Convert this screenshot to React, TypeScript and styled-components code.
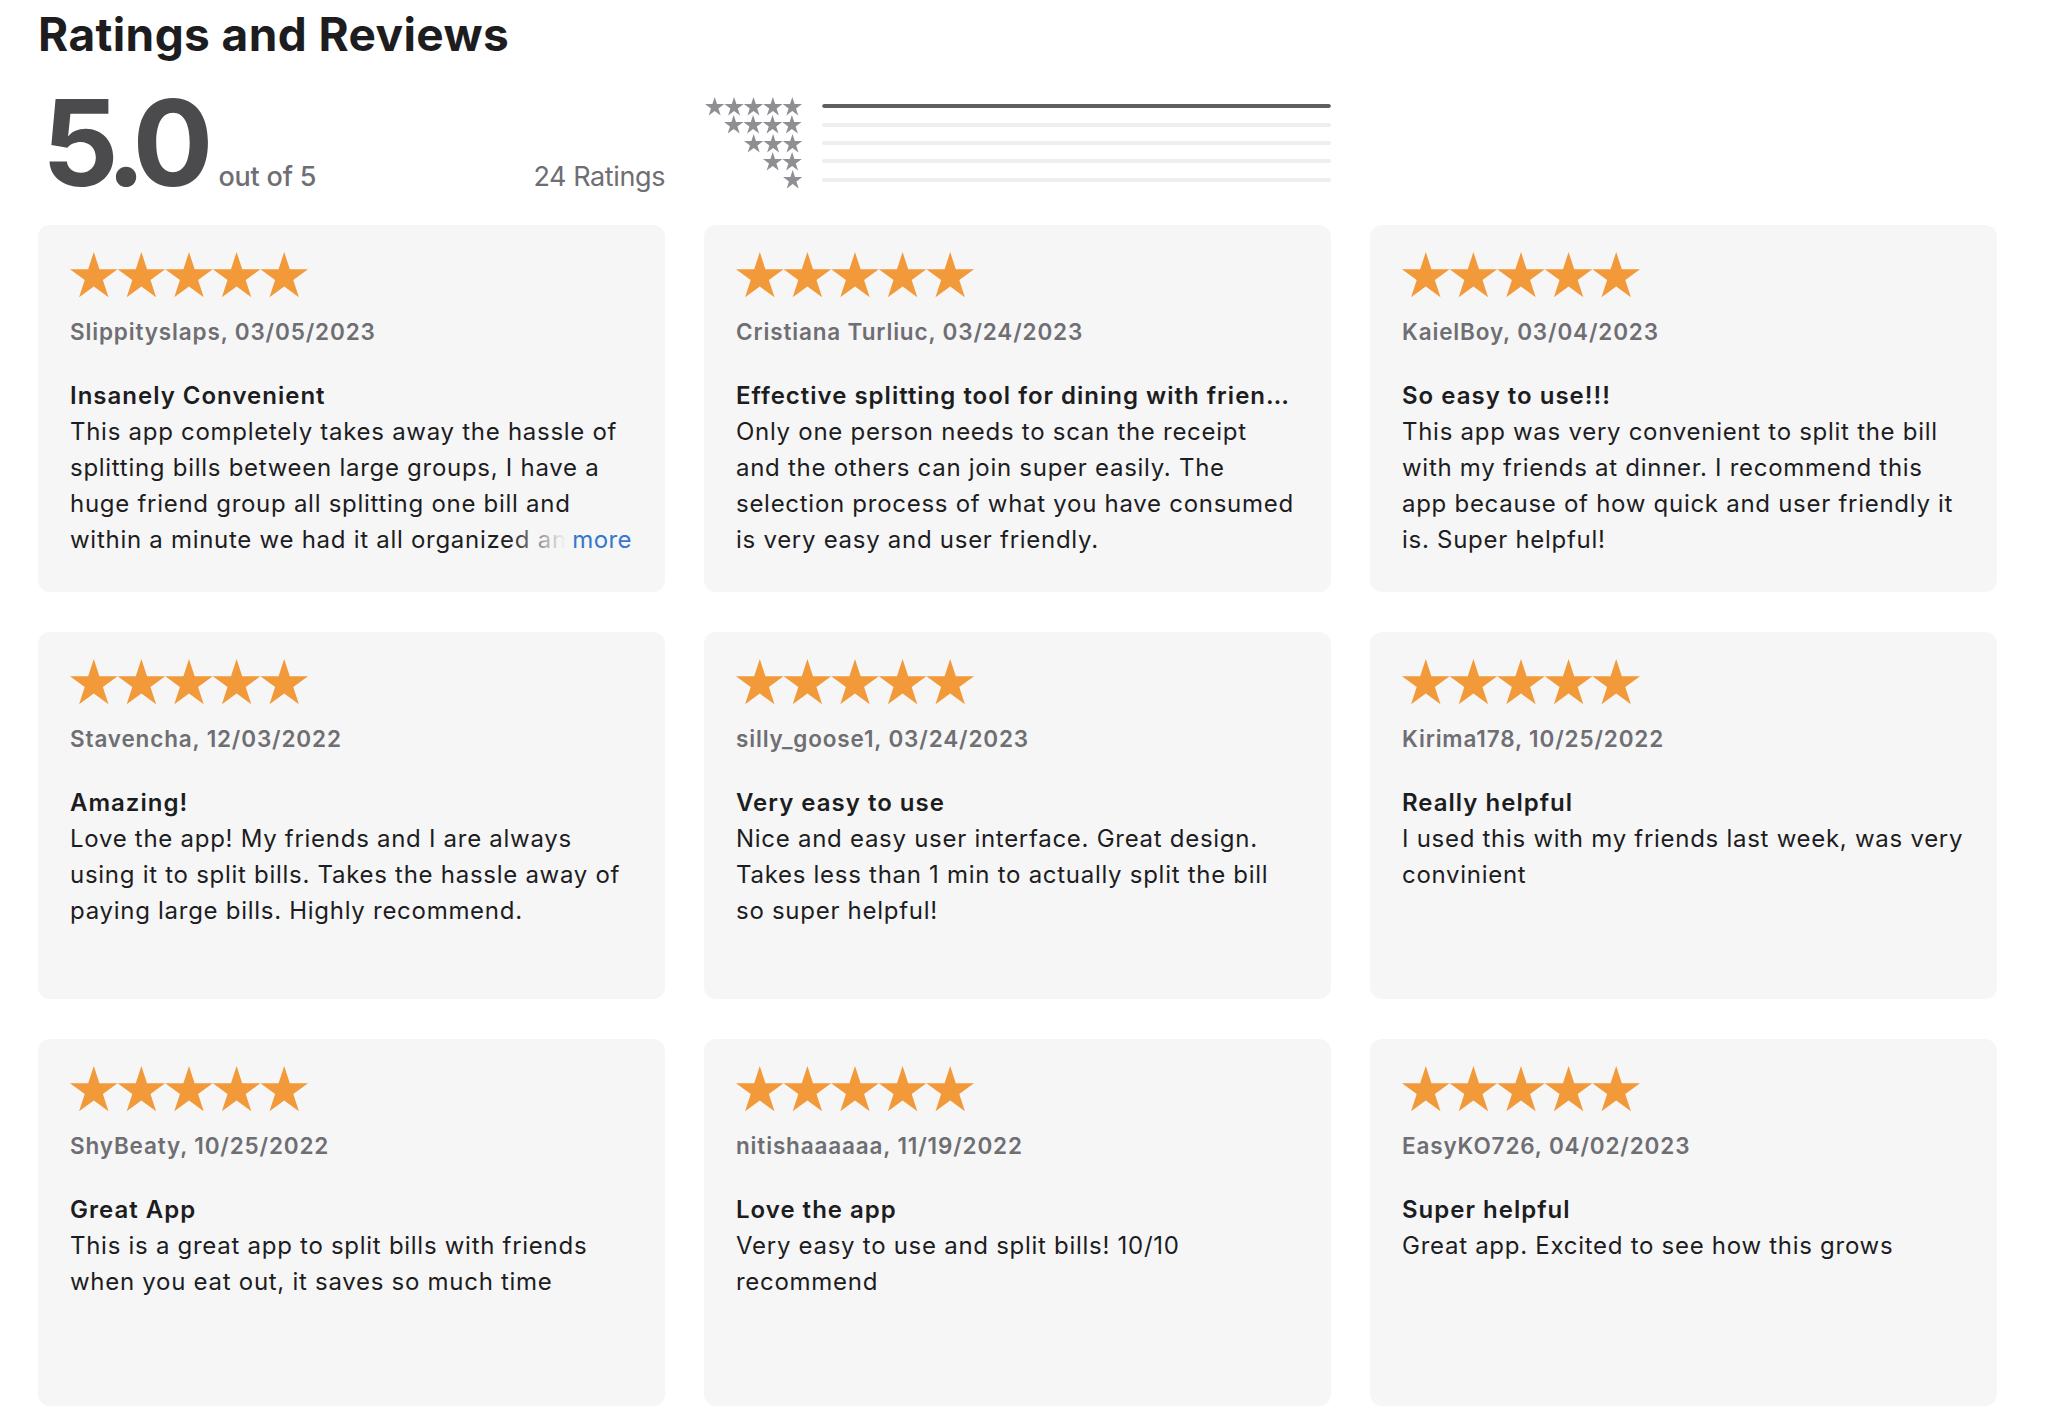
import React from "react";
import styled, { createGlobalStyle } from "styled-components";

const GlobalStyle = createGlobalStyle`
  html, body { margin: 0; padding: 0; background: #ffffff; }
  body { font-family: Inter, "Noto Sans", "Liberation Sans", sans-serif; -webkit-font-smoothing: antialiased; }
`;

const Page = styled.div`
  width: 2048px;
  box-sizing: border-box;
  padding: 6px 50px 21px 38px;
`;

const Heading = styled.h2`
  margin: 0;
  font-size: 46px;
  line-height: 56px;
  font-weight: 700;
  color: #1d1d1f;
  letter-spacing: 0.4px;
`;

const Columns = styled.div`
  display: grid;
  grid-template-columns: repeat(3, 627px);
  column-gap: 39px;
  row-gap: 40px;
`;

const SummaryRow = styled(Columns)`
  margin: 21px 0 22px;
  align-items: center;
`;

const ScoreBlock = styled.div`
  display: flex;
  align-items: baseline;
`;

const Score = styled.span`
  font-size: 120px;
  line-height: 120px;
  font-weight: 700;
  color: #4b4b4e;
  letter-spacing: -10px;
  margin-left: 4px;
`;

const OutOf = styled.span`
  margin-left: 15px;
  font-size: 27px;
  font-weight: 500;
  letter-spacing: -0.2px;
  color: #6e6e73;
`;

const RatingCount = styled.span`
  margin-left: auto;
  font-size: 27px;
  font-weight: 400;
  letter-spacing: -0.4px;
  color: #6e6e73;
`;

const Histogram = styled.div`
  display: grid;
  grid-template-columns: 98px 1fr;
  column-gap: 20px;
  align-items: center;
`;

const HistStars = styled.div`
  height: 18.3px;
  display: flex;
  justify-content: flex-end;
  align-items: center;
`;

const BarTrack = styled.div`
  height: 4px;
  border-radius: 2px;
  background: #eeeef0;
  overflow: hidden;
`;

const BarFill = styled.div`
  height: 100%;
  background: #5e5e61;
  border-radius: 2px;
`;

const Card = styled.article`
  background: #f6f6f7;
  border-radius: 12px;
  height: 367px;
  box-sizing: border-box;
  padding: 27px 33px 0 32px;
  overflow: hidden;
`;

const Reviewer = styled.div`
  margin-top: 19px;
  font-size: 22.5px;
  line-height: 30px;
  font-weight: 600;
  letter-spacing: 0.85px;
  color: #6e6e73;
`;

const ReviewTitle = styled.h3`
  margin: 31px 0 0;
  font-size: 24px;
  line-height: 36px;
  font-weight: 600;
  letter-spacing: 1px;
  color: #1d1d1f;
  white-space: nowrap;
  overflow: hidden;
  text-overflow: ellipsis;
`;

const Body = styled.div`
  position: relative;
  font-size: 24px;
  line-height: 36px;
  font-weight: 400;
  letter-spacing: 0.72px;
  color: #1d1d1f;
  max-height: 144px;
  overflow: hidden;
`;

const More = styled.span`
  position: absolute;
  right: 0;
  bottom: 0;
  line-height: 36px;
  padding-left: 64px;
  color: #3478d0;
  letter-spacing: 0.4px;
  background: linear-gradient(to right, rgba(246, 246, 247, 0) 0px, #f6f6f7 58px);
`;

function starPoints(cx: number, cy: number, R: number, r: number) {
  const pts: string[] = [];
  for (let i = 0; i < 10; i++) {
    const a = ((-90 + i * 36) * Math.PI) / 180;
    const rad = i % 2 === 0 ? R : r;
    pts.push(`${(cx + rad * Math.cos(a)).toFixed(2)},${(cy + rad * Math.sin(a)).toFixed(2)}`);
  }
  return pts.join(" ");
}

const StarRow: React.FC<{ count: number; cell: number; color: string }> = ({ count, cell, color }) => {
  const R = cell / 1.902;
  const h = R * 1.809;
  return (
    <svg width={cell * count} height={Math.ceil(h)} viewBox={`0 0 ${cell * count} ${Math.ceil(h)}`} style={{ display: "block" }}>
      {Array.from({ length: count }).map((_, i) => (
        <polygon key={i} points={starPoints(cell * i + cell / 2, R, R, R * 0.382)} fill={color} />
      ))}
    </svg>
  );
};

type Review = { author: string; date: string; title: string; body: string; more?: boolean };

const reviews: Review[] = [
  {
    author: "Slippityslaps",
    date: "03/05/2023",
    title: "Insanely Convenient",
    body:
      "This app completely takes away the hassle of splitting bills between large groups, I have a huge friend group all splitting one bill and within a minute we had it all organized and everyone paid back.",
    more: true,
  },
  {
    author: "Cristiana Turliuc",
    date: "03/24/2023",
    title: "Effective splitting tool for dining with frien…",
    body:
      "Only one person needs to scan the receipt and the others can join super easily. The selection process of what you have consumed is very easy and user friendly.",
  },
  {
    author: "KaielBoy",
    date: "03/04/2023",
    title: "So easy to use!!!",
    body:
      "This app was very convenient to split the bill with my friends at dinner. I recommend this app because of how quick and user friendly it is. Super helpful!",
  },
  {
    author: "Stavencha",
    date: "12/03/2022",
    title: "Amazing!",
    body:
      "Love the app! My friends and I are always using it to split bills. Takes the hassle away of paying large bills. Highly recommend.",
  },
  {
    author: "silly_goose1",
    date: "03/24/2023",
    title: "Very easy to use",
    body: "Nice and easy user interface. Great design. Takes less than 1 min to actually split the bill so super helpful!",
  },
  {
    author: "Kirima178",
    date: "10/25/2022",
    title: "Really helpful",
    body: "I used this with my friends last week, was very convinient",
  },
  {
    author: "ShyBeaty",
    date: "10/25/2022",
    title: "Great App",
    body: "This is a great app to split bills with friends when you eat out, it saves so much time",
  },
  {
    author: "nitishaaaaaa",
    date: "11/19/2022",
    title: "Love the app",
    body: "Very easy to use and split bills! 10/10 recommend",
  },
  {
    author: "EasyKO726",
    date: "04/02/2023",
    title: "Super helpful",
    body: "Great app. Excited to see how this grows",
  },
];

const distribution = [100, 0, 0, 0, 0];

export default function App() {
  return (
    <>
      <GlobalStyle />
      <Page>
        <Heading>Ratings and Reviews</Heading>
        <SummaryRow>
          <ScoreBlock>
            <Score>5.0</Score>
            <OutOf>out of 5</OutOf>
            <RatingCount>24 Ratings</RatingCount>
          </ScoreBlock>
          <Histogram>
            {distribution.map((pct, i) => (
              <React.Fragment key={i}>
                <HistStars>
                  <StarRow count={5 - i} cell={19.4} color="#8e8e93" />
                </HistStars>
                <BarTrack>
                  <BarFill style={{ width: `${pct}%` }} />
                </BarTrack>
              </React.Fragment>
            ))}
          </Histogram>
        </SummaryRow>
        <Columns>
          {reviews.map((r, i) => (
            <Card key={i}>
              <StarRow count={5} cell={47.6} color="#f2993a" />
              <Reviewer>
                {r.author}, {r.date}
              </Reviewer>
              <ReviewTitle>{r.title}</ReviewTitle>
              <Body>
                {r.body}
                {r.more && <More>more</More>}
              </Body>
            </Card>
          ))}
        </Columns>
      </Page>
    </>
  );
}
